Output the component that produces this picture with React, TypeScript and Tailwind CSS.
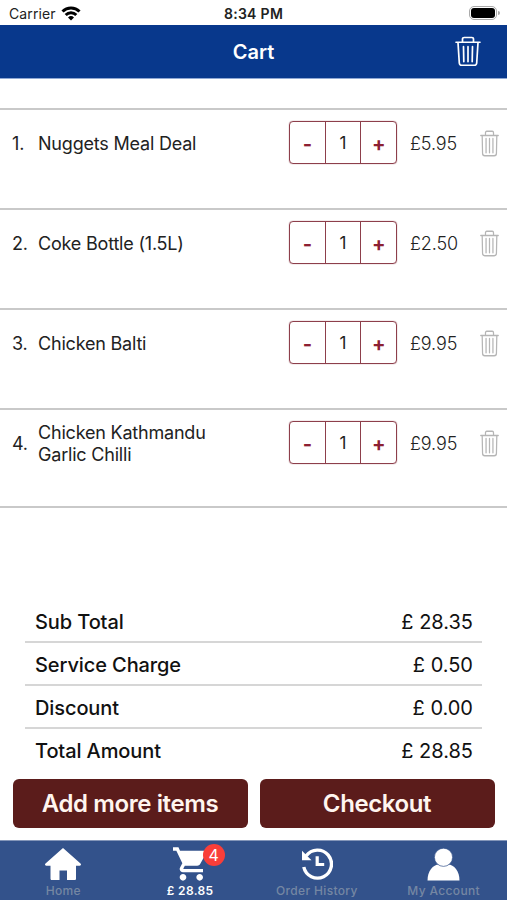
import { useState } from "react";
import clsx from "clsx";

interface CartItem {
  id: number;
  name: string;
  quantity: number;
  price: string;
}

const items: CartItem[] = [
  { id: 1, name: "Nuggets Meal Deal", quantity: 1, price: "5.95" },
  { id: 2, name: "Coke Bottle (1.5L)", quantity: 1, price: "2.50" },
  { id: 3, name: "Chicken Balti", quantity: 1, price: "9.95" },
  { id: 4, name: "Chicken Kathmandu Garlic Chilli", quantity: 1, price: "9.95" },
];

const totals = [
  { label: "Sub Total", amount: "28.35" },
  { label: "Service Charge", amount: "0.50" },
  { label: "Discount", amount: "0.00" },
  { label: "Total Amount", amount: "28.85" },
];

function TrashIcon({ className, straight }: { className?: string; straight?: boolean }) {
  return (
    <svg
      viewBox="0 0 26 32"
      fill="none"
      stroke="currentColor"
      strokeWidth="1.7"
      strokeLinecap="round"
      strokeLinejoin="round"
      preserveAspectRatio="none"
      className={className}
    >
      <path d="M1 6.5h24M7.5 6V3.2c0-1 .7-1.7 1.7-1.7h7.6c1 0 1.7.7 1.7 1.7V6" />
      {straight ? (
        <>
          <path d="M3 7l.5 20.500c0 2 1 3 3 3h13c2 0 3-1 3-3L23 7" />
          <path d="M8.300 10v17M13 10v17M17.700 10v17" />
        </>
      ) : (
        <>
          <path d="M3 7l1.300 20.800c.1 1.600 1 2.400 2.500 2.400h12.400c1.500 0 2.400-.8 2.500-2.400L23 7" />
          <path d="M8.500 11l.3 15.500M13 11v15.500M17.500 11l-.3 15.500" />
        </>
      )}
    </svg>
  );
}

function WifiIcon() {
  return (
    <svg viewBox="0 0 20 15" className="h-[15px] w-5" fill="none" stroke="#000" strokeWidth="3">
      <path d="M1.500 5.500a12 12 0 0 1 17 0" />
      <path d="M4.700 9a7.500 7.500 0 0 1 10.600 0" />
      <path d="M10 14.500 7 11.400a4.300 4.300 0 0 1 6 0z" fill="#000" stroke="none" />
    </svg>
  );
}

function HomeIcon() {
  return (
    <svg viewBox="0 0 36 32" className="h-8 w-9" fill="currentColor">
      <path d="M18 0 35.500 15.500c.9.9.5 2.200-.8 2.200H31V30.500c0 1-.5 1.500-1.500 1.500H22v-9.500h-7.500V32H7c-1 0-1.500-.5-1.500-1.500V17.700H1.300c-1.300 0-1.700-1.300-.8-2.200z" />
    </svg>
  );
}

function CartIcon() {
  return (
    <svg viewBox="1 2 21 20" className="-mt-px h-[34px] w-[35px]" fill="currentColor">
      <path d="M7 18c-1.100 0-1.990.9-1.990 2S5.900 22 7 22s2-.9 2-2-.9-2-2-2zM1 2v2h2l3.600 7.590-1.350 2.450c-.16.28-.25.61-.25.96 0 1.100.9 2 2 2h12v-2H7.420c-.14 0-.25-.11-.25-.25l.03-.12.9-1.630h7.450c.75 0 1.410-.41 1.750-1.030l3.580-6.490A1.003 1.003 0 0 0 20 4H5.210l-.94-2H1zm16 16c-1.100 0-1.990.9-1.990 2s.89 2 1.990 2 2-.9 2-2-.9-2-2-2z" />
    </svg>
  );
}

function HistoryIcon() {
  return (
    <svg viewBox="0 0 32 32" className="size-8" fill="none" stroke="currentColor">
      <path d="M5.200 7.800A14 14 0 1 1 2.800 19" strokeWidth="3.400" />
      <path d="M1 2.800V12.300H10.500z" fill="currentColor" stroke="none" />
      <path d="M16.200 8.300v8.200h7" strokeWidth="3.200" />
    </svg>
  );
}

function AccountIcon() {
  return (
    <svg viewBox="0 0 33 33" className="size-[33px]" fill="currentColor">
      <path d="M.5 32.500C.5 23 6 16.500 12 16.500h9c6 0 11.500 6.500 11.500 16z" />
      <circle cx="16.500" cy="9.300" r="9.100" stroke="#33528b" strokeWidth=".7" />
    </svg>
  );
}

const tabs = [
  { label: "Home", icon: HomeIcon },
  { label: "£ 28.85", icon: CartIcon, badge: 4 },
  { label: "Order History", icon: HistoryIcon },
  { label: "My Account", icon: AccountIcon },
];

function StatusBar() {
  return (
    <div className="grid h-[25px] grid-cols-3 items-center text-[14px] text-[#222]">
      <div className="flex items-center gap-[5px] pt-px pl-[9px]">
        <span className="tracking-[0.1px]">Carrier</span>
        <WifiIcon />
      </div>
      <span className="pt-px text-center font-semibold tracking-[0.3px]">8:34 PM</span>
      <div className="flex items-center justify-end pr-[7px]">
        <div className="h-[14px] w-[28px] rounded-[5px] border border-[#aaa] p-[1px]">
          <div className="h-full rounded-[3px] bg-black" />
        </div>
        <div className="ml-px h-1 w-[2px] rounded-r bg-[#aaa]" />
      </div>
    </div>
  );
}

function Stepper({ value, onChange }: { value: number; onChange: (value: number) => void }) {
  return (
    <div className="-mt-px flex h-[43px] w-[108px] divide-x divide-[#8d3f4b] rounded-[4px] border border-[#8d3f4b] shadow-[0_0_1px_#8d3f4b]">
      <button
        className="flex-1 pt-[2px] text-[20px] font-bold text-[#8c2032]"
        onClick={() => onChange(Math.max(1, value - 1))}
      >
        -
      </button>
      <span className="flex flex-1 items-center justify-center pt-[2px] text-[17px]">{value}</span>
      <button
        className="flex-1 pt-[2px] text-[20px] font-bold text-[#8c2032]"
        onClick={() => onChange(value + 1)}
      >
        +
      </button>
    </div>
  );
}

function CartRow({ item }: { item: CartItem }) {
  const [quantity, setQuantity] = useState(item.quantity);

  return (
    <li className="flex h-[100px] items-start border-b-2 border-[#c9c9c9] pt-3 last:h-[98px]">
      <div className="flex h-[43px] w-[289px] items-center text-[18px] leading-[21.500px] tracking-[-0.200px]">
        <span className="w-[38px] pl-3">{item.id}.</span>
        <span className="w-[190px]">{item.name}</span>
      </div>
      <Stepper value={quantity} onChange={setQuantity} />
      <span className="ml-[13px] flex h-[43px] w-[70px] items-center text-[18px] font-light tracking-[-0.100px] text-[#222]">
        £{item.price}
      </span>
      <button className="mt-2 text-[#b5b5b5]">
        <TrashIcon className="h-[27px] w-[19px]" straight />
      </button>
    </li>
  );
}

function TabBar() {
  return (
    <nav className="grid h-[60px] grid-cols-4 border-t border-[#8496b9] bg-[#33528b] text-white">
      {tabs.map(({ label, icon: Icon, badge }) => (
        <button key={label} className="flex flex-col items-center pt-[6px]">
          <div className="relative flex h-[34px] items-center">
            <Icon />
            {badge && (
              <span className="absolute -top-[3px] left-[30px] flex size-[22px] items-center justify-center rounded-full bg-[#f93e39] text-[16px]">
                {badge}
              </span>
            )}
          </div>
          <span
            className={clsx(
              "mt-[2px] text-[12px] leading-4 tracking-[0.350px] whitespace-nowrap",
              badge ? "font-semibold text-white" : "font-medium text-[#7587a3]",
            )}
          >
            {label}
          </span>
        </button>
      ))}
    </nav>
  );
}

export default function App() {
  return (
    <div className="flex h-[900px] w-[507px] flex-col overflow-hidden bg-white font-['Inter',sans-serif] text-[#222]">
      <StatusBar />
      <header className="grid h-[54px] grid-cols-3 items-center border-b border-[#8fa8d4] bg-[#08388c] text-white">
        <h1 className="col-start-2 pt-px text-center text-[20px] font-semibold">Cart</h1>
        <button className="mr-[26px] justify-self-end">
          <TrashIcon className="h-[31px] w-[26px]" />
        </button>
      </header>

      <ul className="mt-[29px] border-t-2 border-[#c9c9c9]">
        {items.map((item) => (
          <CartRow key={item.id} item={item} />
        ))}
      </ul>

      {/* Totals */}
      <dl className="mx-[25px] mt-auto text-[20px] text-[#111]">
        {totals.map(({ label, amount }) => (
          <div
            key={label}
            className="flex h-[43px] items-center justify-between border-b-2 border-[#d6d6d6] pt-[3px] pr-[9px] pl-[10px] last:h-[44px] last:border-b-0 last:pt-0"
          >
            <dt className="font-medium tracking-[-0.100px]">{label}</dt>
            <dd>£ {amount}</dd>
          </div>
        ))}
      </dl>

      <div className="mt-[6px] mb-3 grid grid-cols-2 gap-3 px-[12.500px] text-[24px] font-semibold tracking-[-0.400px] text-[#fff5ef]">
        <button className="h-[49px] rounded-[6px] bg-[#5b1c1b]">Add more items</button>
        <button className="h-[49px] rounded-[6px] bg-[#5b1c1b]">Checkout</button>
      </div>

      <TabBar />
    </div>
  );
}
